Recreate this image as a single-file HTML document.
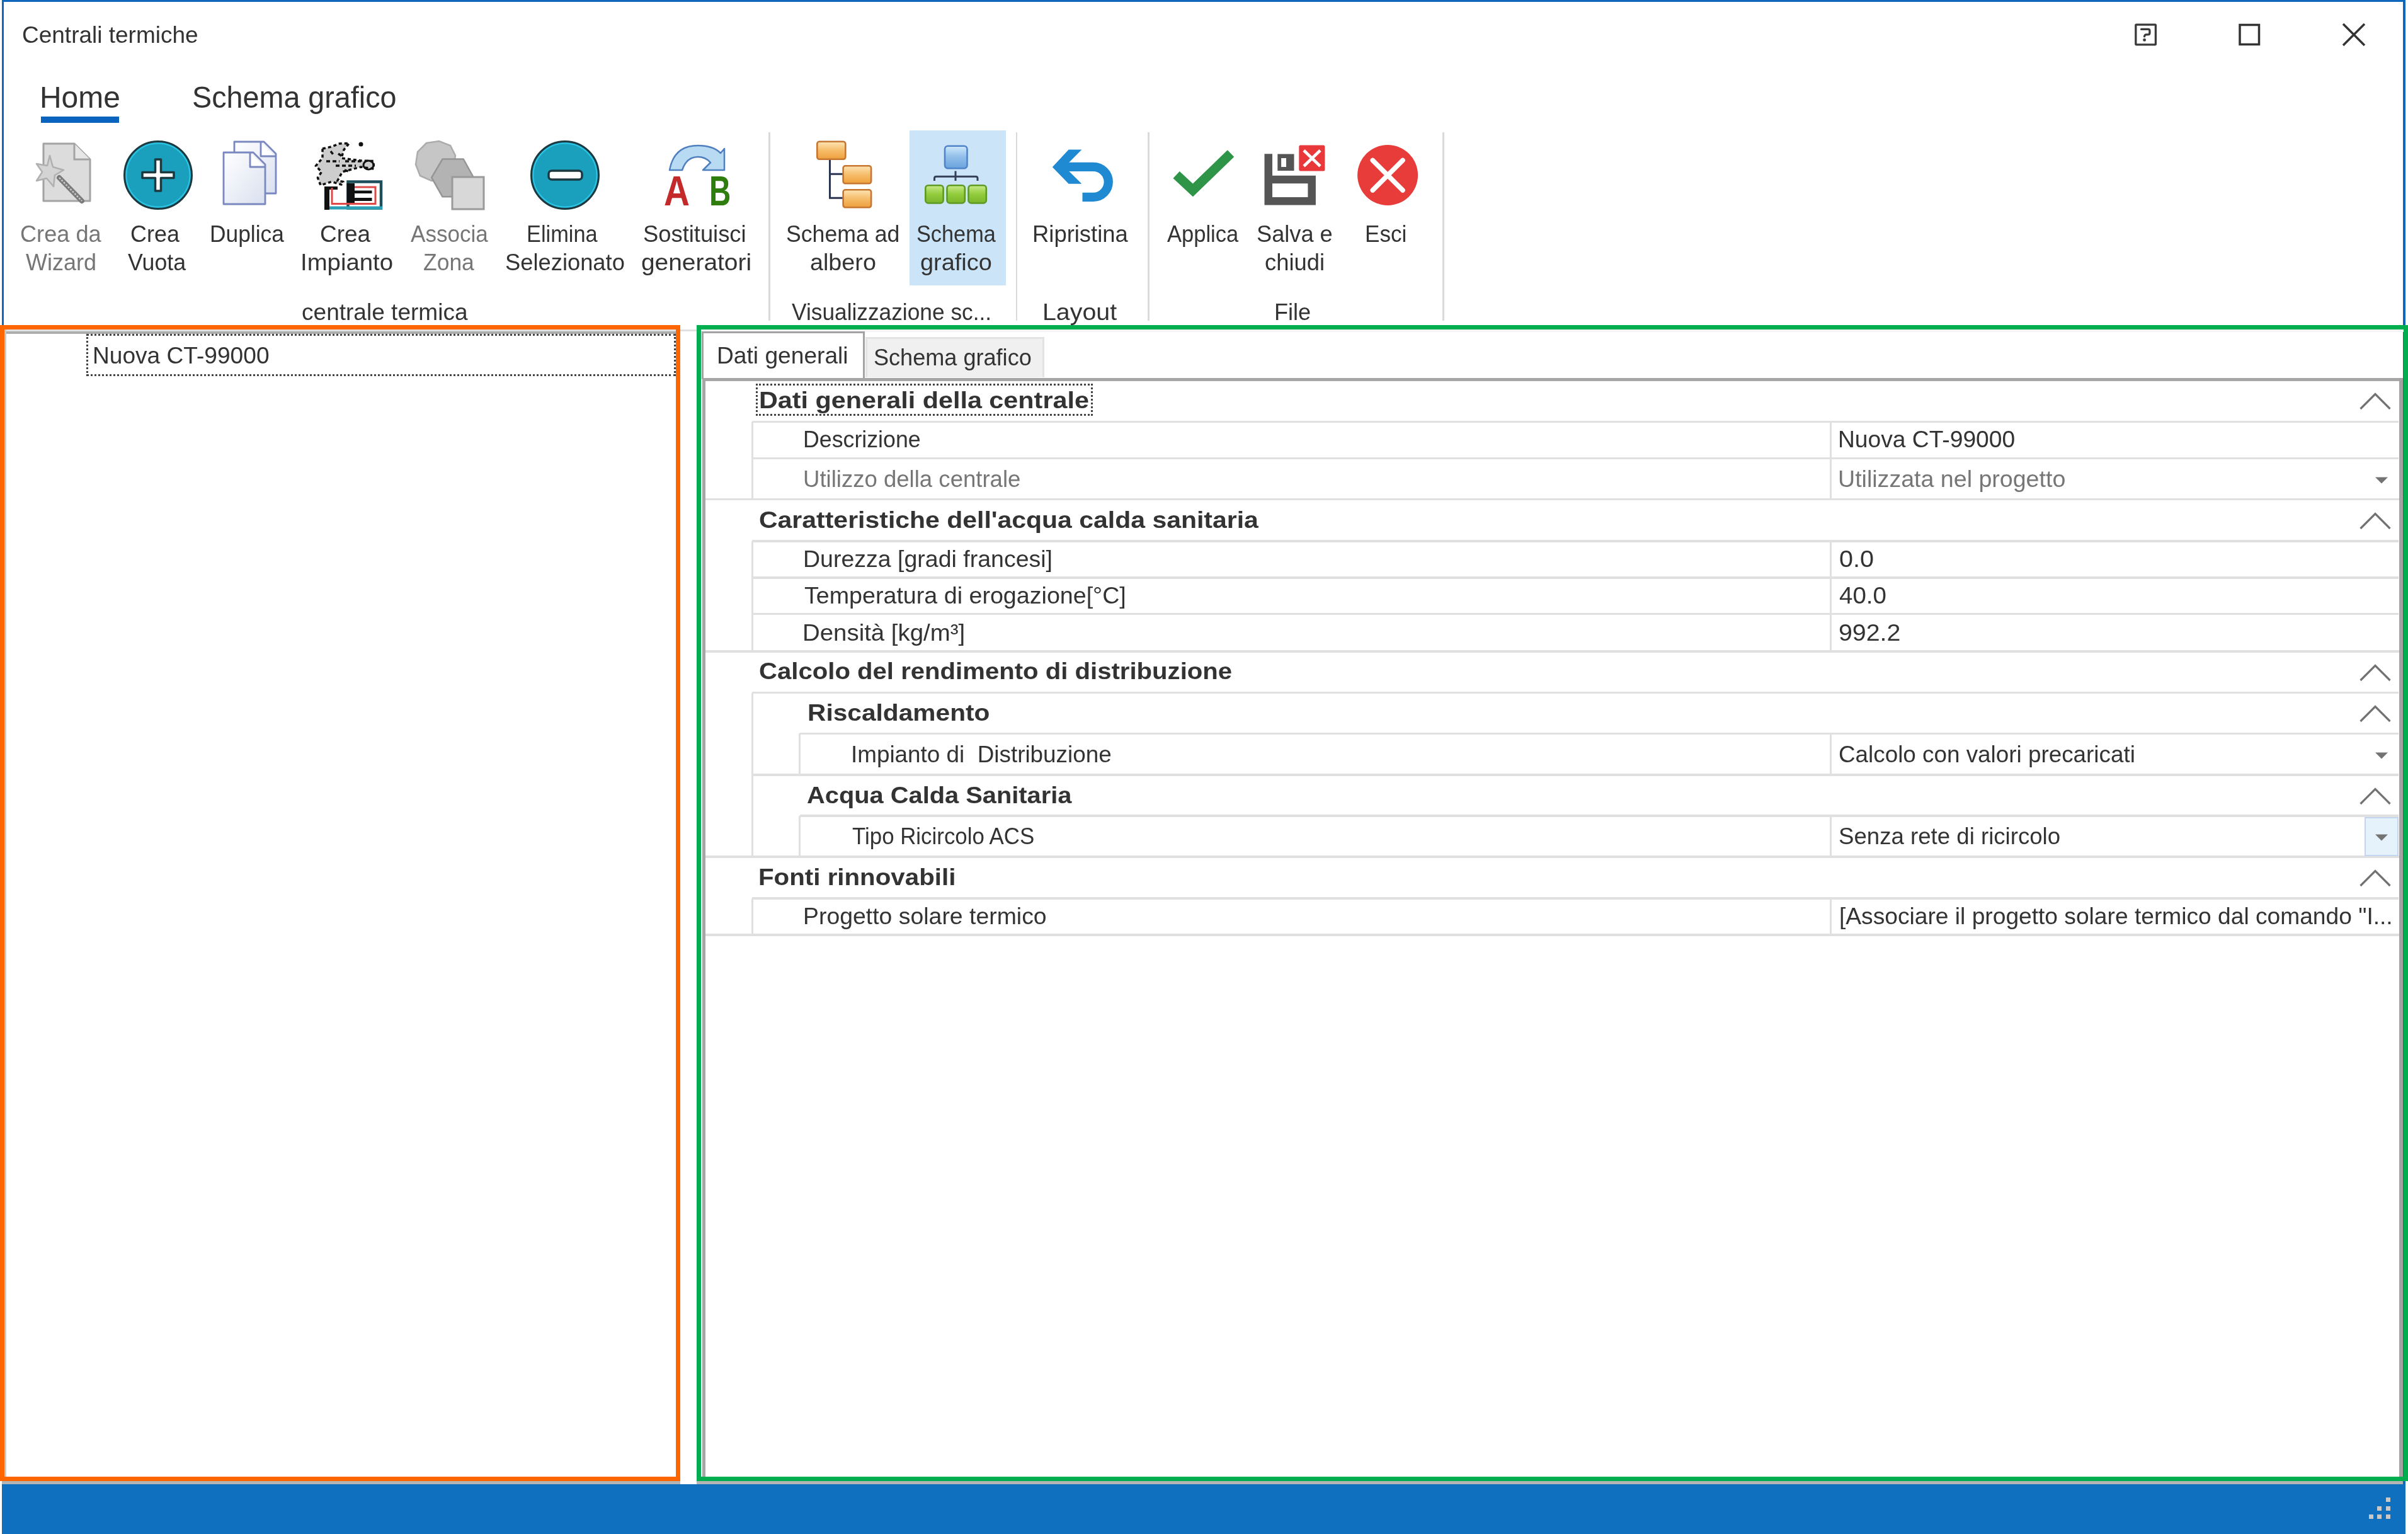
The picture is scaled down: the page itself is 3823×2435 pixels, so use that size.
<!DOCTYPE html>
<html><head><meta charset="utf-8"><style>
html,body{margin:0;padding:0;background:#fff;}
#root{filter:blur(0.5px);position:relative;width:3823px;height:2435px;overflow:hidden;background:#fff;}
.t{position:absolute;white-space:pre;font-family:"Liberation Sans",sans-serif;color:#333333;transform-origin:0 0;}
.r{position:absolute;}
</style></head><body><div id="root">
<div class="r" style="left:3px;top:0px;width:3816px;height:3px;background:#0f67bd;"></div>
<div class="r" style="left:3px;top:0px;width:3px;height:2356px;background:#0f67bd;"></div>
<div class="r" style="left:3815px;top:0px;width:4px;height:2356px;background:#0f67bd;"></div>
<div class="r" style="left:65px;top:185px;width:124px;height:10px;background:#0a64bf;"></div>
<div class="r" style="left:1220px;top:210px;width:2.5px;height:299px;background:#dadada;"></div>
<div class="r" style="left:1612.5px;top:210px;width:2.5px;height:299px;background:#dadada;"></div>
<div class="r" style="left:1822px;top:210px;width:2.5px;height:299px;background:#dadada;"></div>
<div class="r" style="left:2290px;top:210px;width:2.5px;height:299px;background:#dadada;"></div>
<div class="r" style="left:1443.5px;top:207px;width:153.5px;height:246px;background:#cce4f7;"></div>
<div class="r" style="left:6px;top:523px;width:3809px;height:3px;background:#e1e1e1;"></div>
<div class="r" style="left:3px;top:2356px;width:3816px;height:79px;background:#1070c0;"></div>
<div class="r" style="left:3px;top:2351px;width:1077px;height:5px;background:#b4b4b4;"></div>
<div class="r" style="left:1106px;top:2351px;width:2709px;height:5px;background:#b4b4b4;"></div>
<div class="r" style="left:3787.5px;top:2376.5px;width:7.0px;height:7.0px;background:#c8c8c8;"></div>
<div class="r" style="left:3774.2px;top:2390.5px;width:7.0px;height:7.0px;background:#c8c8c8;"></div>
<div class="r" style="left:3787.5px;top:2390.5px;width:7.0px;height:7.0px;background:#c8c8c8;"></div>
<div class="r" style="left:3760.5px;top:2403.5px;width:7.0px;height:7.0px;background:#c8c8c8;"></div>
<div class="r" style="left:3774.2px;top:2403.5px;width:7.0px;height:7.0px;background:#c8c8c8;"></div>
<div class="r" style="left:3787.5px;top:2403.5px;width:7.0px;height:7.0px;background:#c8c8c8;"></div>
<div class="r" style="left:7px;top:526px;width:1066px;height:3.6000000000000227px;background:#adadad;"></div>
<div class="r" style="left:7px;top:523px;width:3px;height:1821px;background:#c8c8c8;"></div>
<div class="r" style="left:137px;top:530px;width:936px;height:67px;box-sizing:border-box;border:3px dotted #444;"></div>
<div class="r" style="left:1113px;top:523px;width:2703px;height:4px;background:#f4f4f4;"></div>
<div class="r" style="left:1114px;top:526px;width:259px;height:76px;box-sizing:border-box;border:3.5px solid #a3a3a3;border-bottom:none;background:#fff;"></div>
<div class="r" style="left:1374px;top:534.5px;width:284px;height:64px;box-sizing:border-box;border:3px solid #e3e3e3;border-bottom:none;background:#f0f0f0;"></div>
<div class="r" style="left:1115px;top:599.5px;width:2699.5px;height:5.0px;background:#a6a6a6;"></div>
<div class="r" style="left:1115px;top:600px;width:5px;height:1744px;background:#a6a6a6;"></div>
<div class="r" style="left:3808.5px;top:600px;width:6.0px;height:1744px;background:#a3a3a3;"></div>
<div class="r" style="left:1194.3px;top:667.8px;width:2614.2px;height:3.6000000000000227px;background:#e0e0e0;"></div>
<div class="r" style="left:1194.3px;top:725.5px;width:2614.2px;height:3.6000000000000227px;background:#e0e0e0;"></div>
<div class="r" style="left:1120px;top:790.8px;width:2688.5px;height:3.6000000000000227px;background:#e0e0e0;"></div>
<div class="r" style="left:1194.3px;top:857.1px;width:2614.2px;height:3.6000000000000227px;background:#e0e0e0;"></div>
<div class="r" style="left:1194.3px;top:915.0px;width:2614.2px;height:3.6000000000000227px;background:#e0e0e0;"></div>
<div class="r" style="left:1194.3px;top:972.9px;width:2614.2px;height:3.6000000000000227px;background:#e0e0e0;"></div>
<div class="r" style="left:1120px;top:1032.4px;width:2688.5px;height:3.599999999999909px;background:#e0e0e0;"></div>
<div class="r" style="left:1194.3px;top:1097.8px;width:2614.2px;height:3.6000000000001364px;background:#e0e0e0;"></div>
<div class="r" style="left:1269.7px;top:1162.6px;width:2538.8px;height:3.6000000000001364px;background:#e0e0e0;"></div>
<div class="r" style="left:1194.3px;top:1228.0px;width:2614.2px;height:3.599999999999909px;background:#e0e0e0;"></div>
<div class="r" style="left:1269.7px;top:1293.4px;width:2538.8px;height:3.599999999999909px;background:#e0e0e0;"></div>
<div class="r" style="left:1120px;top:1358.1px;width:2688.5px;height:3.6000000000001364px;background:#e0e0e0;"></div>
<div class="r" style="left:1194.3px;top:1424.4px;width:2614.2px;height:3.599999999999909px;background:#e0e0e0;"></div>
<div class="r" style="left:1120px;top:1482.1px;width:2688.5px;height:3.6000000000001364px;background:#e0e0e0;"></div>
<div class="r" style="left:1192.5px;top:669.6px;width:3.599999999999909px;height:123.0px;background:#e0e0e0;"></div>
<div class="r" style="left:1192.5px;top:858.9px;width:3.599999999999909px;height:175.30000000000007px;background:#e0e0e0;"></div>
<div class="r" style="left:1192.5px;top:1099.6px;width:3.599999999999909px;height:260.3000000000002px;background:#e0e0e0;"></div>
<div class="r" style="left:1192.5px;top:1426.2px;width:3.599999999999909px;height:57.700000000000045px;background:#e0e0e0;"></div>
<div class="r" style="left:1267.9px;top:1164.4px;width:3.599999999999909px;height:65.39999999999986px;background:#e0e0e0;"></div>
<div class="r" style="left:1267.9px;top:1295.2px;width:3.599999999999909px;height:64.70000000000005px;background:#e0e0e0;"></div>
<div class="r" style="left:2904.7px;top:669.6px;width:3.600000000000364px;height:123.0px;background:#e0e0e0;"></div>
<div class="r" style="left:2904.7px;top:858.9px;width:3.600000000000364px;height:175.30000000000007px;background:#e0e0e0;"></div>
<div class="r" style="left:2904.7px;top:1164.4px;width:3.600000000000364px;height:65.39999999999986px;background:#e0e0e0;"></div>
<div class="r" style="left:2904.7px;top:1295.2px;width:3.600000000000364px;height:64.70000000000005px;background:#e0e0e0;"></div>
<div class="r" style="left:2904.7px;top:1426.2px;width:3.600000000000364px;height:57.700000000000045px;background:#e0e0e0;"></div>
<div class="r" style="left:1200px;top:609px;width:535px;height:51px;box-sizing:border-box;border:3px dotted #444;"></div>
<div class="r" style="left:3754px;top:1297px;width:53.5px;height:62px;box-sizing:border-box;border:2.5px solid #c4d6ee;background:#e5f1fb;"></div>
<svg class="r" style="left:3744px;top:620.3px" width="54" height="34" viewBox="0 0 54 34"><polyline points="3.5,29 27,5.5 50.5,29" fill="none" stroke="#727272" stroke-width="3.2"/></svg>
<svg class="r" style="left:3744px;top:809.5px" width="54" height="34" viewBox="0 0 54 34"><polyline points="3.5,29 27,5.5 50.5,29" fill="none" stroke="#727272" stroke-width="3.2"/></svg>
<svg class="r" style="left:3744px;top:1051px" width="54" height="34" viewBox="0 0 54 34"><polyline points="3.5,29 27,5.5 50.5,29" fill="none" stroke="#727272" stroke-width="3.2"/></svg>
<svg class="r" style="left:3744px;top:1115.7px" width="54" height="34" viewBox="0 0 54 34"><polyline points="3.5,29 27,5.5 50.5,29" fill="none" stroke="#727272" stroke-width="3.2"/></svg>
<svg class="r" style="left:3744px;top:1246.8px" width="54" height="34" viewBox="0 0 54 34"><polyline points="3.5,29 27,5.5 50.5,29" fill="none" stroke="#727272" stroke-width="3.2"/></svg>
<svg class="r" style="left:3744px;top:1377px" width="54" height="34" viewBox="0 0 54 34"><polyline points="3.5,29 27,5.5 50.5,29" fill="none" stroke="#727272" stroke-width="3.2"/></svg>
<svg class="r" style="left:3767px;top:755px" width="26" height="14" viewBox="0 0 26 14"><polygon points="4,2.5 24,2.5 14,12.5" fill="#737373"/></svg>
<svg class="r" style="left:3767px;top:1191.5px" width="26" height="14" viewBox="0 0 26 14"><polygon points="4,2.5 24,2.5 14,12.5" fill="#737373"/></svg>
<svg class="r" style="left:3767px;top:1322px" width="26" height="14" viewBox="0 0 26 14"><polygon points="4,2.5 24,2.5 14,12.5" fill="#737373"/></svg>
<svg class="r" style="left:3385px;top:34px" width="180" height="42" viewBox="0 0 180 42"></svg>
<svg class="r" style="left:3386px;top:35px" width="40" height="40" viewBox="0 0 40 40">
<rect x="4.8" y="4.2" width="31.6" height="31.6" rx="1" fill="none" stroke="#3a3a3a" stroke-width="3.3"/>
<path d="M13.6 11.4 H24.3 Q26.9 11.4 26.9 14 V17.2 Q26.9 19.8 24.3 19.8 H21.6 Q19.2 19.8 18.5 22.8" fill="none" stroke="#3a3a3a" stroke-width="3.3" stroke-linecap="round" stroke-linejoin="round"/>
<circle cx="18.6" cy="28.4" r="2.4" fill="#3a3a3a"/></svg>
<svg class="r" style="left:3551px;top:35px" width="40" height="40" viewBox="0 0 40 40"><rect x="5" y="4.5" width="30.5" height="31" fill="none" stroke="#333" stroke-width="3.5"/></svg>
<svg class="r" style="left:3716px;top:35px" width="42" height="40" viewBox="0 0 42 40"><path d="M4 3 L38 37 M38 3 L4 37" stroke="#333" stroke-width="3.5"/></svg>
<svg class="r" style="left:50px;top:222px" width="100" height="105" viewBox="0 0 100 105">
<path d="M19 6 H68 L93 31 V97 H19 Z" fill="#dcdcdc" stroke="#a3a3a3" stroke-width="3" stroke-linejoin="round"/>
<path d="M68 6 V31 H93" fill="#e6e6e6" stroke="#a3a3a3" stroke-width="3"/>
<path d="M44 60 L80 97" stroke="#7a7a7a" stroke-width="8" stroke-linecap="round"/>
<path d="M44 60 L80 97" stroke="#c8c8c8" stroke-width="2.5" stroke-dasharray="3 2"/>
<polygon points="29,25 34,43 51,48 37,56 35,74 24,61 8,65 17,51 8,38 25,41" fill="#d4d4d4" stroke="#b0b0b0" stroke-width="2.5" stroke-linejoin="round"/>
</svg>
<svg class="r" style="left:193.5px;top:221px" width="114" height="114" viewBox="0 0 114 114">
<circle cx="57" cy="57" r="53.5" fill="#1aa0bd" stroke="#1c3940" stroke-width="3"/>
<circle cx="57" cy="57" r="50.5" fill="none" stroke="#2cc4e4" stroke-width="2"/><path d="M52.5 32 H61.5 V52.5 H82 V61.5 H61.5 V82 H52.5 V61.5 H32 V52.5 H52.5 Z" fill="#fff" stroke="#1c3940" stroke-width="3.5" stroke-linejoin="round"/></svg>
<svg class="r" style="left:840px;top:221px" width="114" height="114" viewBox="0 0 114 114">
<circle cx="57" cy="57" r="53.5" fill="#1aa0bd" stroke="#1c3940" stroke-width="3"/>
<circle cx="57" cy="57" r="50.5" fill="none" stroke="#2cc4e4" stroke-width="2"/><rect x="31" y="50" width="53" height="14" rx="5" fill="#fff" stroke="#1c3940" stroke-width="3.5"/></svg>
<svg class="r" style="left:350px;top:220px" width="95" height="110" viewBox="0 0 95 110">
<defs><linearGradient id="dg" x1="0" y1="0" x2="1" y2="1"><stop offset="0" stop-color="#ffffff"/><stop offset="1" stop-color="#d9e0ef"/></linearGradient></defs>
<path d="M22 5 H69 L88 24 V87 H22 Z" fill="url(#dg)" stroke="#7b87bf" stroke-width="2.8" stroke-linejoin="round"/>
<path d="M64 6 V28 H87" fill="#fff" stroke="#7b87bf" stroke-width="2.8" stroke-linejoin="round"/>
<path d="M5 22 H52 L71 41 V104 H5 Z" fill="url(#dg)" stroke="#7b87bf" stroke-width="2.8" stroke-linejoin="round"/>
<path d="M47 23 V45 H70" fill="#fff" stroke="#7b87bf" stroke-width="2.8" stroke-linejoin="round"/>
</svg>
<svg class="r" style="left:495px;top:218px" width="120" height="120" viewBox="0 0 120 120">
<polygon points="17,18 31,15 44,10 59.5,9.4 51,19.6 47,33 78,37 98,37.6 98.6,50 78,47 62.6,51 48.5,54.8 40.7,69 50,70.4 47,75 31.3,70.4 14,76 9.4,64 15.6,54.8 6.3,45.4 17,33" fill="#cdcdcd" stroke="#111" stroke-width="3.5" stroke-dasharray="5 4" stroke-linejoin="round"/>
<path d="M23 38 H44 M53 38 H78 M38 45 H70 M30 22 L36 30 M42 26 L48 30 M52 52 L58 54" stroke="#111" stroke-width="3.5" stroke-dasharray="6 4"/>
<circle cx="78" cy="11" r="3.5" fill="#111"/>
<ellipse cx="90" cy="44" rx="8" ry="7" fill="none" stroke="#111" stroke-width="3"/>
<rect x="57.5" y="70.5" width="52.5" height="42" fill="#fff" stroke="#1d4e5a" stroke-width="4.5"/>
<rect x="20" y="109.5" width="92" height="5" fill="#2a9fb6"/>
<rect x="20" y="78" width="8" height="37" fill="#111"/>
<rect x="20" y="78" width="21" height="5" fill="#111"/>
<path d="M32 80 V105.5 H101 V79 H62" fill="none" stroke="#e04848" stroke-width="3"/>
<rect x="55.5" y="73" width="12.5" height="31" fill="#111"/>
<rect x="68" y="84.5" width="27.5" height="4.5" fill="#111"/>
<rect x="68" y="96" width="27.5" height="5" fill="#111"/>
</svg>
<svg class="r" style="left:655px;top:219px" width="120" height="118" viewBox="0 0 120 118">
<polygon points="22,8 42,5 60,12 68,28 64,50 50,66 30,68 12,60 5,42 8,22" fill="#c6c6c6" stroke="#acacac" stroke-width="2.5"/>
<polygon points="30.2,62.8 47.5,33.5 80.7,33.5 97,63 80.7,93.3 47.5,93.3" fill="#b3b3b3" stroke="#959595" stroke-width="2.5" stroke-linejoin="round"/>
<rect x="63" y="62" width="50" height="51" fill="#d8d8d8" stroke="#9a9a9a" stroke-width="3"/>
</svg>
<svg class="r" style="left:1040px;top:210px" width="140" height="135" viewBox="0 0 140 135">
<path d="M23 60 Q30 21 68 21 Q92 21 104 33 L110 26 L110 60 L76 60 L88 48 Q80 39 68 39 Q50 39 43 60 Z" fill="#b8dbf3" stroke="#4f7fbf" stroke-width="2.5" stroke-linejoin="round"/>
<g transform="translate(14,116) scale(0.86,1)"><text x="0" y="0" font-family="Liberation Sans" font-weight="700" font-size="66" fill="#c42a2a">A</text></g>
<g transform="translate(86,116) scale(0.72,1)"><text x="0" y="0" font-family="Liberation Sans" font-weight="700" font-size="66" fill="#2e7d0e">B</text></g>
</svg>
<svg class="r" style="left:1280px;top:210px" width="310" height="135" viewBox="0 0 310 135">
<defs>
<linearGradient id="og" x1="0" y1="0" x2="0" y2="1"><stop offset="0" stop-color="#fde4b4"/><stop offset="0.5" stop-color="#f6bd6a"/><stop offset="1" stop-color="#ee9f3c"/></linearGradient>
<linearGradient id="bg" x1="0" y1="0" x2="0" y2="1"><stop offset="0" stop-color="#cfe8fb"/><stop offset="0.5" stop-color="#8fbde9"/><stop offset="1" stop-color="#6aa3dc"/></linearGradient>
<linearGradient id="gg" x1="0" y1="0" x2="0" y2="1"><stop offset="0" stop-color="#c9eb8a"/><stop offset="0.5" stop-color="#92cc3c"/><stop offset="1" stop-color="#7ab52a"/></linearGradient>
</defs>
<path d="M37.5 43 V104.3 H58 M37.5 66.3 H58" fill="none" stroke="#2b3550" stroke-width="3"/>
<rect x="17.3" y="14.8" width="45" height="28" rx="3.5" fill="url(#og)" stroke="#c67630" stroke-width="2.6"/>
<rect x="58.6" y="53.3" width="44.5" height="28" rx="3.5" fill="url(#og)" stroke="#c67630" stroke-width="2.6"/>
<rect x="58.6" y="91.3" width="44.5" height="28" rx="3.5" fill="url(#og)" stroke="#c67630" stroke-width="2.6"/>
<path d="M237 61.5 V77 M203.5 77 V73 Q203.5 70.2 206.5 70.2 H269 Q272 70.2 272 73 V77" fill="none" stroke="#34405a" stroke-width="3"/>
<rect x="220" y="21.8" width="35.5" height="35.5" rx="5" fill="url(#bg)" stroke="#4f84cb" stroke-width="2.6"/>
<rect x="189.3" y="84.2" width="28.3" height="28.3" rx="4.5" fill="url(#gg)" stroke="#5c9a24" stroke-width="2.6"/>
<rect x="223.5" y="84.2" width="28.3" height="28.3" rx="4.5" fill="url(#gg)" stroke="#5c9a24" stroke-width="2.6"/>
<rect x="257.5" y="84.2" width="28.3" height="28.3" rx="4.5" fill="url(#gg)" stroke="#5c9a24" stroke-width="2.6"/>
</svg>
<svg class="r" style="left:1668px;top:234px" width="102" height="90" viewBox="0 0 102 90">
<path d="M28 30.85 H67.75 A24 24 0 0 1 67.75 78.85 H50.5" fill="none" stroke="#1f89d1" stroke-width="14.3"/>
<polygon points="28.6,3.6 49.4,3.6 29.3,23.7 29.3,38 49.4,57.7 28.6,57.7 2.8,31.2" fill="#1f89d1"/>
</svg>
<svg class="r" style="left:1860px;top:234px" width="102" height="84" viewBox="0 0 102 84">
<path d="M7.6 43.4 L33.8 67.8 L94 9.7" fill="none" stroke="#2e9447" stroke-width="15"/>
</svg>
<svg class="r" style="left:1995px;top:220px" width="120" height="120" viewBox="0 0 120 120">
<path d="M12.5 24.3 H25 V58.7 H93.9 V105.6 H12.5 Z M25 71.2 V93.1 H81.4 V71.2 Z" fill="#555555" fill-rule="evenodd"/>
<path d="M33.3 24.6 H59.5 V50.9 H33.3 Z M39.1 30.9 V45 H47 V30.9 Z" fill="#555555" fill-rule="evenodd"/>
<rect x="67.3" y="10.6" width="41.1" height="41" rx="2.5" fill="#e8383a"/>
<path d="M75 18.8 L101 43.8 M101 18.8 L75 43.8" stroke="#fff" stroke-width="4.7"/>
</svg>
<svg class="r" style="left:2152px;top:227.4px" width="102" height="102" viewBox="0 0 102 102">
<circle cx="51.1" cy="51" r="48" fill="#e83c3a"/>
<path d="M27.3 27.5 L75 75 M75 27.5 L27.3 75" stroke="#fff" stroke-width="7.6" stroke-linecap="round"/>
</svg>
<div class="t" style="left:34.8px;top:37.6px;font-size:36.5px;line-height:36.5px;transform:scaleX(1.0135);">Centrali termiche</div>
<div class="t" style="left:62.7px;top:130.0px;font-size:49px;line-height:49px;transform:scaleX(0.9783);">Home</div>
<div class="t" style="left:305.1px;top:130.0px;font-size:49px;line-height:49px;transform:scaleX(0.9533);">Schema grafico</div>
<div class="t" style="left:32.2px;top:354.1px;font-size:36.5px;line-height:36.5px;color:#767676;transform:scaleX(0.9909);">Crea da</div>
<div class="t" style="left:40.7px;top:398.6px;font-size:36.5px;line-height:36.5px;color:#767676;transform:scaleX(0.9873);">Wizard</div>
<div class="t" style="left:206.7px;top:354.1px;font-size:36.5px;line-height:36.5px;transform:scaleX(0.9841);">Crea</div>
<div class="t" style="left:202.7px;top:398.6px;font-size:36.5px;line-height:36.5px;transform:scaleX(0.9791);">Vuota</div>
<div class="t" style="left:332.8px;top:354.1px;font-size:36.5px;line-height:36.5px;transform:scaleX(0.9685);">Duplica</div>
<div class="t" style="left:507.8px;top:354.1px;font-size:36.5px;line-height:36.5px;transform:scaleX(1.0125);">Crea</div>
<div class="t" style="left:477.3px;top:398.6px;font-size:36.5px;line-height:36.5px;transform:scaleX(1.0503);">Impianto</div>
<div class="t" style="left:652.0px;top:354.1px;font-size:36.5px;line-height:36.5px;color:#767676;transform:scaleX(0.9614);">Associa</div>
<div class="t" style="left:671.6px;top:398.6px;font-size:36.5px;line-height:36.5px;color:#767676;transform:scaleX(0.9715);">Zona</div>
<div class="t" style="left:836.3px;top:354.1px;font-size:36.5px;line-height:36.5px;transform:scaleX(0.9410);">Elimina</div>
<div class="t" style="left:802.3px;top:398.6px;font-size:36.5px;line-height:36.5px;transform:scaleX(0.9954);">Selezionato</div>
<div class="t" style="left:1021.3px;top:354.1px;font-size:36.5px;line-height:36.5px;transform:scaleX(0.9958);">Sostituisci</div>
<div class="t" style="left:1018.0px;top:398.6px;font-size:36.5px;line-height:36.5px;transform:scaleX(1.0652);">generatori</div>
<div class="t" style="left:1248.3px;top:354.1px;font-size:36.5px;line-height:36.5px;transform:scaleX(0.9767);">Schema ad</div>
<div class="t" style="left:1285.5px;top:398.6px;font-size:36.5px;line-height:36.5px;transform:scaleX(1.0336);">albero</div>
<div class="t" style="left:1455.1px;top:354.1px;font-size:36.5px;line-height:36.5px;transform:scaleX(0.9391);">Schema</div>
<div class="t" style="left:1461.2px;top:398.6px;font-size:36.5px;line-height:36.5px;transform:scaleX(1.0386);">grafico</div>
<div class="t" style="left:1639.1px;top:354.1px;font-size:36.5px;line-height:36.5px;transform:scaleX(0.9976);">Ripristina</div>
<div class="t" style="left:1852.7px;top:354.1px;font-size:36.5px;line-height:36.5px;transform:scaleX(0.9453);">Applica</div>
<div class="t" style="left:1994.6px;top:354.1px;font-size:36.5px;line-height:36.5px;transform:scaleX(0.9919);">Salva e</div>
<div class="t" style="left:2008.2px;top:398.6px;font-size:36.5px;line-height:36.5px;transform:scaleX(0.9963);">chiudi</div>
<div class="t" style="left:2166.9px;top:354.1px;font-size:36.5px;line-height:36.5px;transform:scaleX(0.9613);">Esci</div>
<div class="t" style="left:479.3px;top:478.3px;font-size:36.5px;line-height:36.5px;transform:scaleX(1.0150);">centrale termica</div>
<div class="t" style="left:1257.0px;top:478.3px;font-size:36.5px;line-height:36.5px;transform:scaleX(0.9668);">Visualizzazione sc...</div>
<div class="t" style="left:1654.9px;top:478.3px;font-size:36.5px;line-height:36.5px;transform:scaleX(1.0773);">Layout</div>
<div class="t" style="left:2023.1px;top:478.3px;font-size:36.5px;line-height:36.5px;transform:scaleX(0.9895);">File</div>
<div class="t" style="left:146.5px;top:547.1px;font-size:36.5px;line-height:36.5px;transform:scaleX(1.0166);">Nuova CT-99000</div>
<div class="t" style="left:1137.7px;top:547.1px;font-size:36.5px;line-height:36.5px;transform:scaleX(1.0179);">Dati generali</div>
<div class="t" style="left:1386.6px;top:549.7px;font-size:36.5px;line-height:36.5px;transform:scaleX(0.9888);">Schema grafico</div>
<div class="t" style="left:1205.1px;top:618.1px;font-size:36.5px;line-height:36.5px;font-weight:700;transform:scaleX(1.1328);">Dati generali della centrale</div>
<div class="t" style="left:1274.6px;top:680.4px;font-size:36.5px;line-height:36.5px;transform:scaleX(0.9789);">Descrizione</div>
<div class="t" style="left:2917.7px;top:680.4px;font-size:36.5px;line-height:36.5px;transform:scaleX(1.0188);">Nuova CT-99000</div>
<div class="t" style="left:1274.9px;top:742.6px;font-size:36.5px;line-height:36.5px;color:#767676;transform:scaleX(1.0015);">Utilizzo della centrale</div>
<div class="t" style="left:2918.1px;top:742.6px;font-size:36.5px;line-height:36.5px;color:#767676;transform:scaleX(1.0293);">Utilizzata nel progetto</div>
<div class="t" style="left:1204.6px;top:807.9px;font-size:36.5px;line-height:36.5px;font-weight:700;transform:scaleX(1.1222);">Caratteristiche dell'acqua calda sanitaria</div>
<div class="t" style="left:1274.5px;top:869.5px;font-size:36.5px;line-height:36.5px;transform:scaleX(1.0275);">Durezza [gradi francesi]</div>
<div class="t" style="left:2919.5px;top:869.5px;font-size:36.5px;line-height:36.5px;transform:scaleX(1.0822);">0.0</div>
<div class="t" style="left:1276.7px;top:928.1px;font-size:36.5px;line-height:36.5px;transform:scaleX(1.0310);">Temperatura di erogazione[°C]</div>
<div class="t" style="left:2919.9px;top:928.1px;font-size:36.5px;line-height:36.5px;transform:scaleX(1.0538);">40.0</div>
<div class="t" style="left:1274.4px;top:986.6px;font-size:36.5px;line-height:36.5px;transform:scaleX(1.0519);">Densità [kg/m³]</div>
<div class="t" style="left:2919.1px;top:986.6px;font-size:36.5px;line-height:36.5px;transform:scaleX(1.0772);">992.2</div>
<div class="t" style="left:1204.6px;top:1048.4px;font-size:36.5px;line-height:36.5px;font-weight:700;transform:scaleX(1.0991);">Calcolo del rendimento di distribuzione</div>
<div class="t" style="left:1282.2px;top:1113.7px;font-size:36.5px;line-height:36.5px;font-weight:700;transform:scaleX(1.1146);">Riscaldamento</div>
<div class="t" style="left:1350.5px;top:1179.6px;font-size:36.5px;line-height:36.5px;transform:scaleX(1.0094);">Impianto di  Distribuzione</div>
<div class="t" style="left:2918.9px;top:1179.6px;font-size:36.5px;line-height:36.5px;transform:scaleX(1.0091);">Calcolo con valori precaricati</div>
<div class="t" style="left:1280.7px;top:1245.1px;font-size:36.5px;line-height:36.5px;font-weight:700;transform:scaleX(1.0909);">Acqua Calda Sanitaria</div>
<div class="t" style="left:1353.1px;top:1310.1px;font-size:36.5px;line-height:36.5px;transform:scaleX(0.9550);">Tipo Ricircolo ACS</div>
<div class="t" style="left:2919.2px;top:1310.1px;font-size:36.5px;line-height:36.5px;transform:scaleX(1.0032);">Senza rete di ricircolo</div>
<div class="t" style="left:1204.4px;top:1375.3px;font-size:36.5px;line-height:36.5px;font-weight:700;transform:scaleX(1.1038);">Fonti rinnovabili</div>
<div class="t" style="left:1274.5px;top:1436.9px;font-size:36.5px;line-height:36.5px;transform:scaleX(1.0247);">Progetto solare termico</div>
<div class="t" style="left:2920.1px;top:1436.9px;font-size:36.5px;line-height:36.5px;transform:scaleX(1.0182);">[Associare il progetto solare termico dal comando "I...</div>
<div class="r" style="left:0px;top:516px;width:1080px;height:1835px;box-sizing:border-box;border:7px solid #ff6600;"></div>
<div class="r" style="left:1106px;top:516px;width:2717px;height:1835px;box-sizing:border-box;border:7px solid #00ad4f;"></div>
</div></body></html>
